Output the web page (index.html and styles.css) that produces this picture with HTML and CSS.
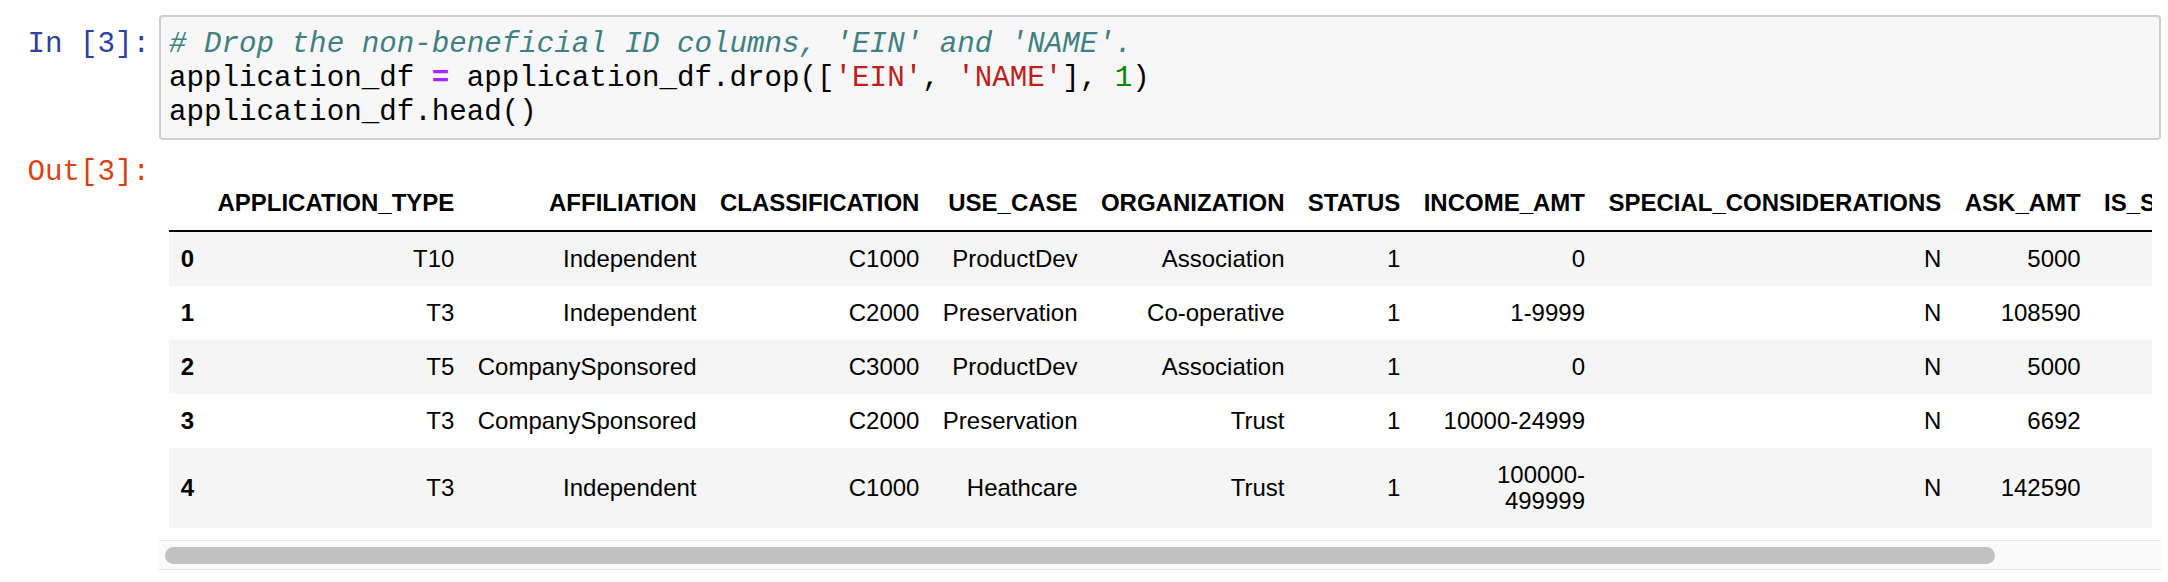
FILE: index.html
```html
<!DOCTYPE html>
<html>
<head>
<meta charset="utf-8">
<link rel="stylesheet" href="styles.css">
</head>
<body>
<div class="cell">
  <div class="io-row input-row">
    <div class="prompt prompt-in">In&nbsp;[3]:</div>
    <div class="input-area"><pre class="code"><span class="cm-comment"># Drop the non-beneficial ID columns, 'EIN' and 'NAME'.</span>
application_df <span class="cm-operator">=</span> application_df.drop([<span class="cm-string">'EIN'</span>, <span class="cm-string">'NAME'</span>], <span class="cm-number">1</span>)
application_df.head()</pre></div>
  </div>
  <div class="io-row output-row">
    <div class="prompt prompt-out">Out[3]:</div>
    <div class="output-sub">
      <div class="table-clip">
        <table class="dataframe">
          <thead>
            <tr>
              <th></th>
              <th>APPLICATION_TYPE</th>
              <th>AFFILIATION</th>
              <th>CLASSIFICATION</th>
              <th>USE_CASE</th>
              <th>ORGANIZATION</th>
              <th>STATUS</th>
              <th>INCOME_AMT</th>
              <th>SPECIAL_CONSIDERATIONS</th>
              <th>ASK_AMT</th>
              <th>IS_SUCCESSFUL</th>
            </tr>
          </thead>
          <tbody>
            <tr>
              <th>0</th><td>T10</td><td>Independent</td><td>C1000</td><td>ProductDev</td><td>Association</td><td>1</td><td>0</td><td>N</td><td>5000</td><td>1</td>
            </tr>
            <tr>
              <th>1</th><td>T3</td><td>Independent</td><td>C2000</td><td>Preservation</td><td>Co-operative</td><td>1</td><td>1-9999</td><td>N</td><td>108590</td><td>1</td>
            </tr>
            <tr>
              <th>2</th><td>T5</td><td>CompanySponsored</td><td>C3000</td><td>ProductDev</td><td>Association</td><td>1</td><td>0</td><td>N</td><td>5000</td><td>0</td>
            </tr>
            <tr>
              <th>3</th><td>T3</td><td>CompanySponsored</td><td>C2000</td><td>Preservation</td><td>Trust</td><td>1</td><td>10000-24999</td><td>N</td><td>6692</td><td>1</td>
            </tr>
            <tr>
              <th>4</th><td>T3</td><td>Independent</td><td>C1000</td><td>Heathcare</td><td>Trust</td><td>1</td><td>100000-499999</td><td>N</td><td>142590</td><td>1</td>
            </tr>
          </tbody>
        </table>
      </div>
      <div class="hscroll"><div class="hscroll-thumb"></div></div>
    </div>
  </div>
</div>
</body>
</html>
```

FILE: styles.css
```css
html, body {
  margin: 0;
  padding: 0;
  background: #ffffff;
}

.cell {
  padding: 15px 7px 0 0;
}

.io-row {
  display: flex;
  align-items: flex-start;
}

.prompt {
  flex: none;
  width: 159px;
  box-sizing: border-box;
  padding: 13px 9px 0 0;
  text-align: right;
  font-family: "Liberation Mono", "DejaVu Sans Mono", monospace;
  font-size: 29.2px;
  line-height: 34px;
  white-space: nowrap;
}

.prompt-in {
  color: #303f9f;
}

.prompt-out {
  color: #d84315;
}

.input-area {
  flex: 1;
  min-width: 0;
  border: 2px solid #cfcfcf;
  border-radius: 4px;
  background: #f7f7f7;
  padding: 11px 10px 8px 8px;
}

.code {
  margin: 0;
  font-family: "Liberation Mono", "DejaVu Sans Mono", monospace;
  font-size: 29.2px;
  line-height: 34px;
  color: #000000;
  white-space: pre;
}

.cm-comment {
  color: #408080;
  font-style: italic;
}

.cm-operator {
  color: #aa22ff;
  font-weight: bold;
}

.cm-string {
  color: #ba2121;
}

.cm-number {
  color: #008800;
}

.output-row {
  margin-top: 5px;
}

.output-row .prompt {
  padding-top: 11px;
}

.output-sub {
  flex: 1;
  min-width: 0;
  padding-top: 31px;
}

.table-clip {
  overflow: hidden;
  padding-left: 10px;
  margin-right: 9px;
}

.dataframe {
  border-collapse: collapse;
  border-spacing: 0;
  border: none;
  width: min-content;
  font-family: "Liberation Sans", Arial, sans-serif;
  font-size: 24px;
  color: #000000;
}

.dataframe thead {
  border-bottom: 2px solid #000000;
  vertical-align: bottom;
}

.dataframe th,
.dataframe td {
  text-align: right;
  vertical-align: middle;
  padding: 14px 11.7px;
  line-height: 26px;
  border: none;
}

.dataframe th {
  font-weight: bold;
}

.dataframe thead th {
  vertical-align: bottom;
}

.dataframe tbody tr:nth-child(odd) {
  background: #f5f5f5;
}

.hscroll {
  margin-top: 12px;
  height: 28px;
  border-top: 1px solid #e6e6e6;
  border-bottom: 1px solid #e6e6e6;
  background: #fafafa;
  display: flex;
  align-items: center;
  padding-left: 6px;
}

.hscroll-thumb {
  width: 91.7%;
  height: 17px;
  border-radius: 9px;
  background: #c1c1c1;
}
```
